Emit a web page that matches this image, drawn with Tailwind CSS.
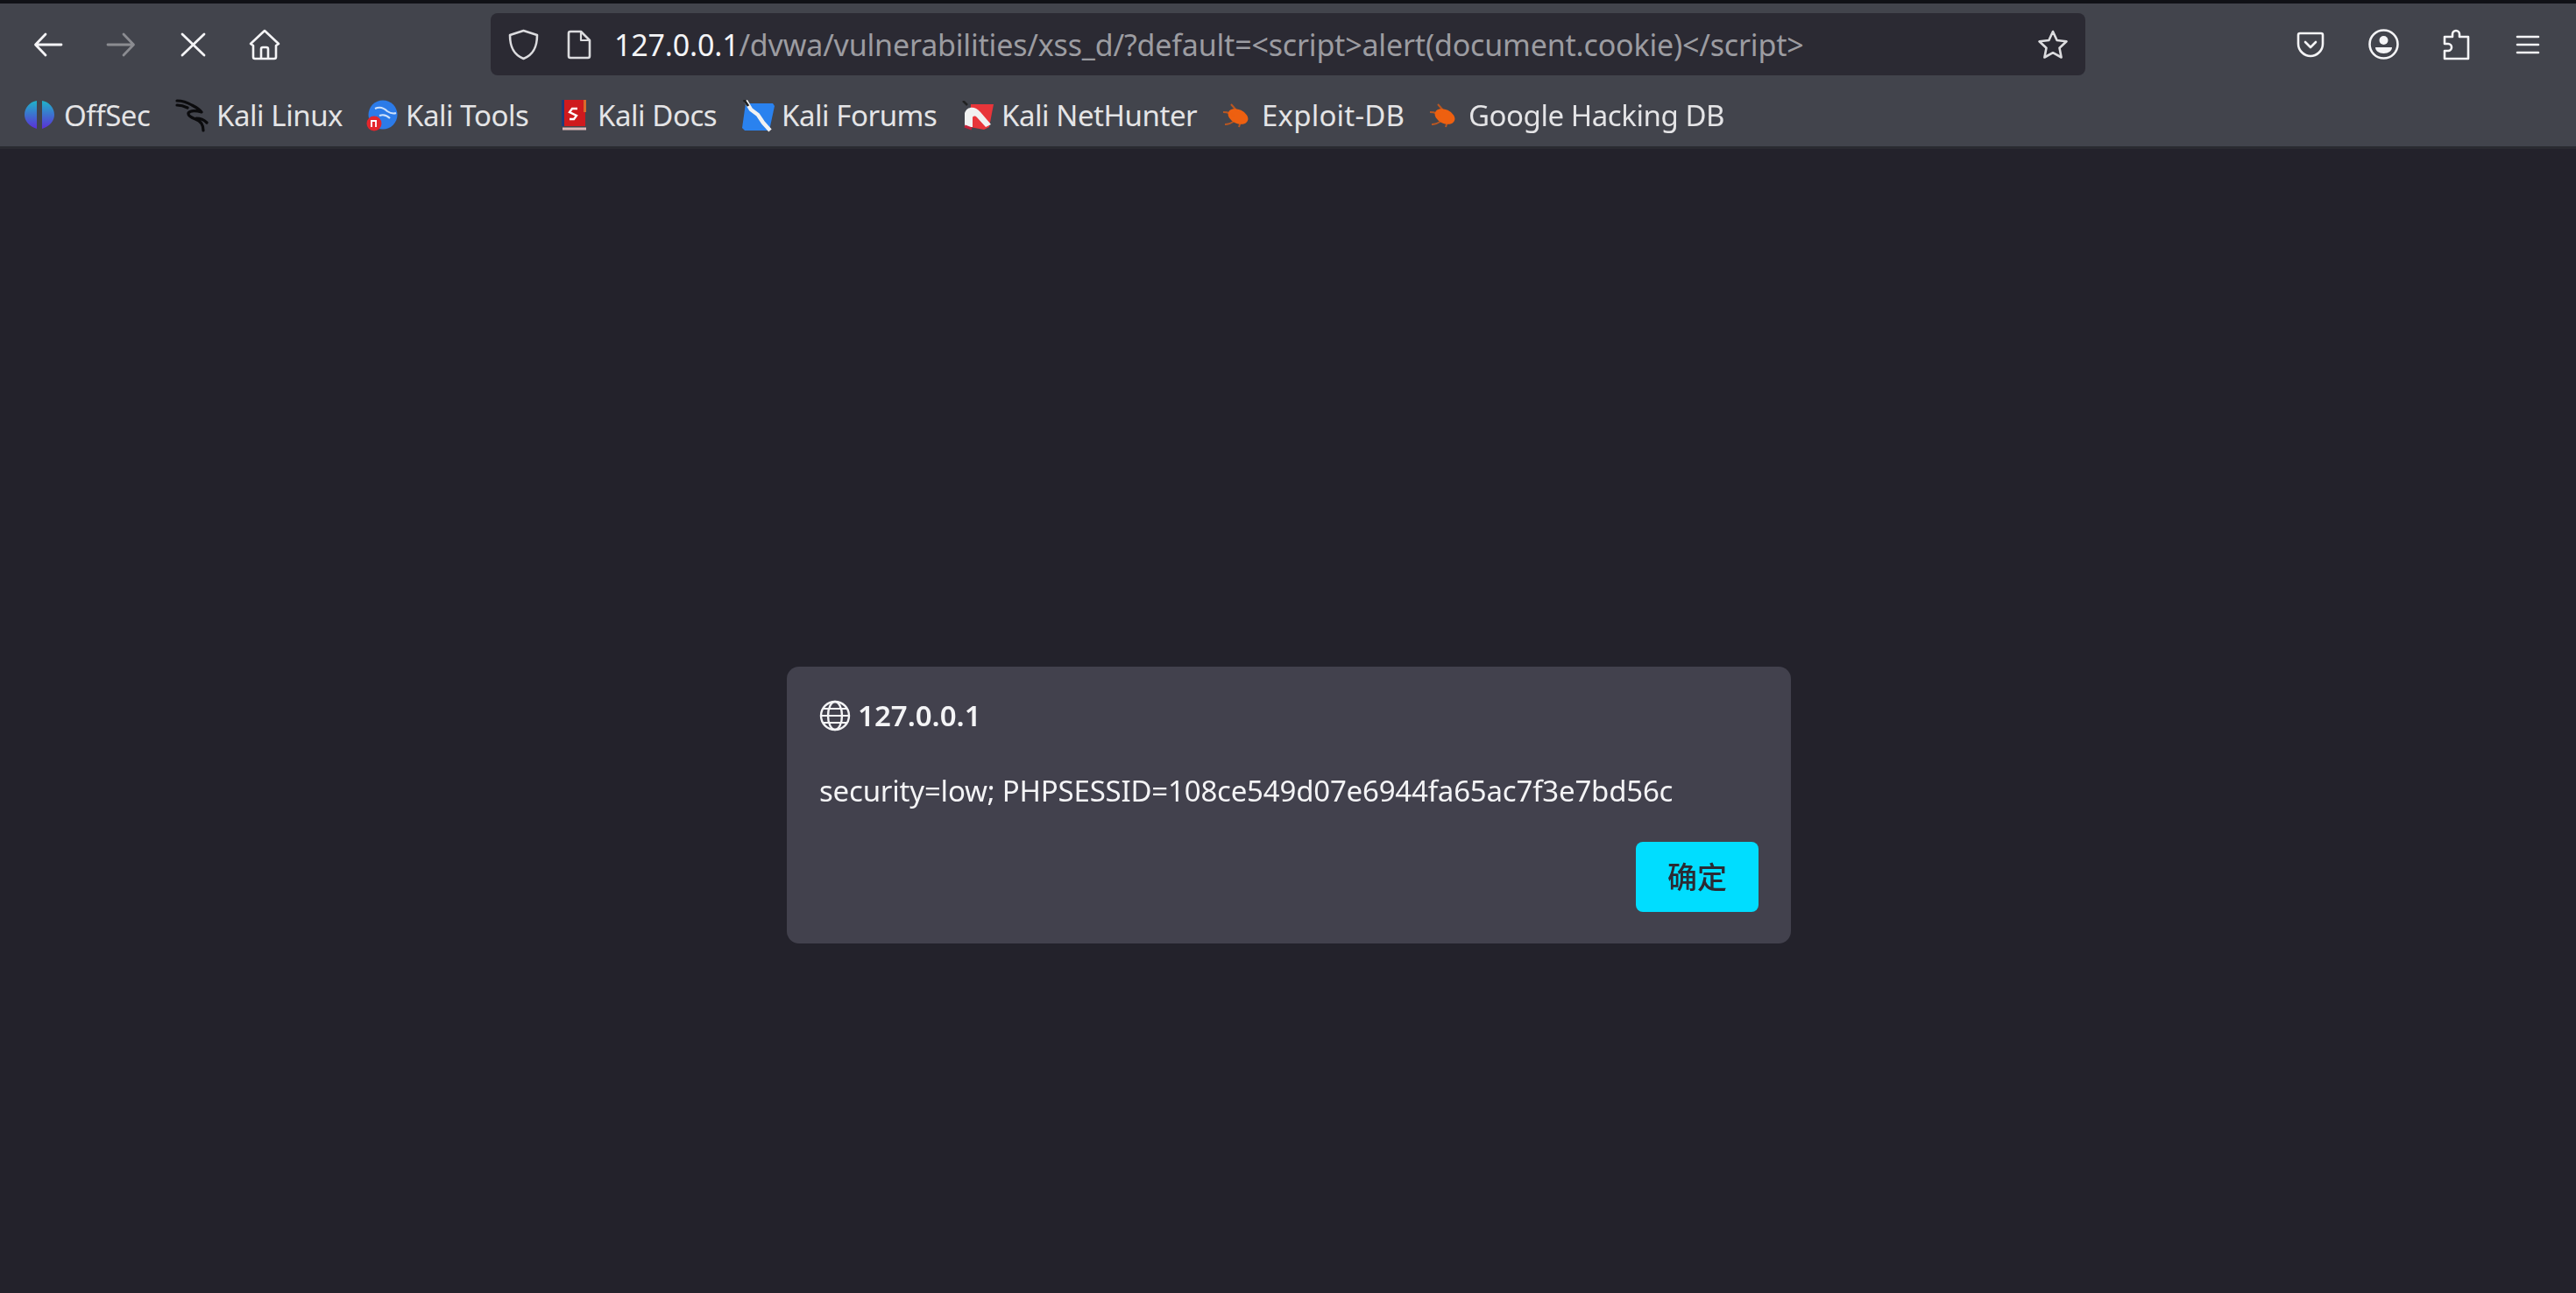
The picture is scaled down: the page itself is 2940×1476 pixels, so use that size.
<!DOCTYPE html>
<html lang="zh">

<head>
    <meta charset="UTF-8">
    <script src="https://cdn.jsdelivr.net/npm/@tailwindcss/browser@4"></script>
    <title>127.0.0.1</title>
</head>

<body class="bg-[#23222b] font-['Noto_Sans','Noto_Sans_CJK_SC',sans-serif] overflow-hidden">
    <div class="w-[2940px] h-[1476px] flex flex-col blur-[0.7px]">

        <!-- browser chrome -->
        <header class="shrink-0 border-t-4 border-[#101116] bg-[#42444c] h-[170px] border-b-3 border-b-[#2a2b31] flex flex-col">
            <div class="h-[93px] shrink-0 flex items-center">
                <div class="flex items-center w-[560px]">
                    <svg class="ml-[38px] w-[34px] h-[28px]" viewBox="0 0 34 28" fill="none" stroke="#f4f4f6" stroke-width="2.800" stroke-linecap="round" stroke-linejoin="round"><path d="M32 14H3M14 2 2.500 14 14 26"/></svg>
                    <svg class="ml-[49px] w-[34px] h-[28px]" viewBox="0 0 34 28" fill="none" stroke="#8b8c91" stroke-width="2.800" stroke-linecap="round" stroke-linejoin="round"><path d="M2 14h29M20 2l11.500 12L20 26"/></svg>
                    <svg class="ml-[51px] w-[29px] h-[28px]" viewBox="0 0 29 28" fill="none" stroke="#f4f4f6" stroke-width="2.800" stroke-linecap="round"><path d="M2 2l25 24M27 2 2 26"/></svg>
                    <svg class="ml-[49px] w-[36px] h-[36px]" viewBox="0 0 36 36" fill="none" stroke="#f4f4f6" stroke-width="2.600" stroke-linejoin="round"><path d="M2 17 18 2l16 15-3 2v13a2 2 0 0 1-2 2H7a2 2 0 0 1-2-2V19z"/><path d="M14 34V23a2 2 0 0 1 2-2h4a2 2 0 0 1 2 2v11"/></svg>
                </div>

                <div class="w-[1820px] h-[71px] rounded-[8px] bg-[#2b2a33] flex items-center">
                    <svg class="ml-[20px] w-[35px] h-[36px]" viewBox="0 0 35 36" fill="none" stroke="#dcdcdf" stroke-width="2.600" stroke-linejoin="round"><path d="M17.500 2 33 7c0 12-3 22-15.500 27C5 29 2 19 2 7z"/></svg>
                    <svg class="ml-[32px] w-[28px] h-[34px]" viewBox="0 0 28 34" fill="none" stroke="#dcdcdf" stroke-width="2.600" stroke-linejoin="round"><path d="M4 2h12l10 10v18a2 2 0 0 1-2 2H4a2 2 0 0 1-2-2V4a2 2 0 0 1 2-2z"/><path d="M16 2v10h10" stroke-width="2.200"/></svg>
                    <p class="ml-[26px] text-[34px] tracking-[-0.18px] leading-[60px] whitespace-nowrap text-[#f4f4f6]">127.0.0.1<span class="text-[#9c9ca1]">/dvwa/vulnerabilities/xss_d/?default=&lt;script&gt;alert(document.cookie)&lt;/script&gt;</span></p>
                    <svg class="ml-auto mr-[19px] w-[36px] h-[36px]" viewBox="0 0 36 36" fill="none" stroke="#dcdcdf" stroke-width="2.600" stroke-linejoin="round"><path d="M18 3l4.600 10 10.900 1.300-8 7.400 2.100 10.800L18 27.200 8.400 32.500l2.100-10.800-8-7.400L13.400 13z"/></svg>
                </div>

                <div class="flex items-center ml-[241px]">
                    <svg class="w-[32px] h-[30px]" viewBox="0 0 32 30" fill="none" stroke="#f4f4f6" stroke-width="2.600" stroke-linecap="round" stroke-linejoin="round"><path d="M4 2h24a2 2 0 0 1 2 2v10c0 8-7 14-14 14S2 22 2 14V4a2 2 0 0 1 2-2z"/><path d="M10 12l6 6 6-6"/></svg>
                    <svg class="ml-[50px] w-[35px] h-[35px]" viewBox="0 0 35 35" fill="none"><circle cx="17.500" cy="17.500" r="16" stroke="#f4f4f6" stroke-width="2.600"/><circle cx="17.500" cy="13" r="5" fill="#f4f4f6"/><path d="M8 21h19c0 4-4 7-9.500 7S8 25 8 21z" fill="#f4f4f6"/></svg>
                    <svg class="ml-[50px] w-[31px] h-[36px]" viewBox="0 0 31 36" fill="none" stroke="#f4f4f6" stroke-width="2.600" stroke-linejoin="round"><path d="M2 34V25h4a4 4 0 0 0 0-8H2V9h9V6a4 4 0 0 1 8 0v3h10v25z"/></svg>
                    <svg class="ml-[52px] w-[28px] h-[22px]" viewBox="0 0 28 22" fill="none" stroke="#f4f4f6" stroke-width="2.600" stroke-linecap="round"><path d="M2 2h24M2 11h24M2 20h24"/></svg>
                </div>
            </div>

            <!-- bookmarks -->
            <nav class="flex-1 flex items-center text-[33px] tracking-[-0.45px] text-[#e4e4e6] whitespace-nowrap">
                <a class="ml-[28px] flex items-center w-[172px]">
                    <svg class="w-[34px] h-[36px] mr-[11px]" viewBox="0 0 34 36"><defs><linearGradient id="off" x1="0" y1="0" x2="0" y2="1"><stop offset="0" stop-color="#1fb4c8"/><stop offset="1" stop-color="#5b2fd6"/></linearGradient></defs><path d="M14 1C6 2 0 9 0 17c0 7 5 13 14 16zM20 1c8 1 14 8 14 16 0 7-5 13-14 16z" fill="url(#off)"/><path d="M17 1v34" stroke="url(#off)" stroke-width="2"/></svg>
                    <span>OffSec</span>
                </a>
                <a class="flex items-center w-[218px]">
                    <svg class="w-[38px] h-[38px] mr-[9px]" viewBox="0 0 38 38" fill="none" stroke="#0b0b0d" stroke-width="3.200" stroke-linecap="round" stroke-linejoin="round"><path d="M2 2c6 0 12 2 17 5 4 2 8 4 11 8-6-2-13-2-15 1-1 3 3 5 8 7 6 2 9 7 9 13M2 7c4 0 8 1 12 3M24 22c4 0 9 2 12 5"/></svg>
                    <span>Kali Linux</span>
                </a>
                <a class="flex items-center w-[223px]">
                    <svg class="w-[36px] h-[36px] mr-[9px]" viewBox="0 0 36 36" fill="none"><circle cx="19" cy="17" r="16.500" fill="#2c7be8"/><path d="M10 10c6-3 11 0 14 3 3 2 7 3 10 2M15 18c5-2 9 0 12 3" stroke="#cfe2fb" stroke-width="2"/><circle cx="9" cy="27" r="8.500" fill="#e3262c"/><path d="M6 24v7M11 24v7M5 24h7" stroke="#fff" stroke-width="1.800"/></svg>
                    <span>Kali Tools</span>
                </a>
                <a class="flex items-center w-[206px]">
                    <svg class="w-[28px] h-[36px] mr-[13px]" viewBox="0 0 28 36" fill="none"><path d="M0 0h27v30H0z" fill="#cf1a1e"/><path d="M0 0h3v30H0z" fill="#1f3a78"/><path d="M25 0h3v14h-3z" fill="#d96a2a"/><path d="M1 33h27" stroke="#d9b8b8" stroke-width="3"/><path d="M18 10h-6l-3 4 8 4-3 4H9" stroke="#fff" stroke-width="2.400"/></svg>
                    <span>Kali Docs</span>
                </a>
                <a class="flex items-center w-[251px]">
                    <svg class="w-[37px] h-[37px] mr-[8px]" viewBox="0 0 37 37" fill="none"><path d="M4 4h31l2 3-6 28H3l-3-3z" fill="#2a82ef"/><path d="M4 1l6 10 8 6 6 9 8 9" stroke="#f2f2f2" stroke-width="4.500"/><path d="M2 0l5 7" stroke="#222" stroke-width="3"/></svg>
                    <span>Kali Forums</span>
                </a>
                <a class="flex items-center w-[297px]">
                    <svg class="w-[36px] h-[34px] mr-[9px]" viewBox="0 0 36 34" fill="none"><path d="M10 4h26l-5 26-6 3-16-3z" fill="#e8353a"/><path d="M3 30h9V20c0-3 3-3 5-1l10 11 6-3-12-14C15 6 6 6 3 14z" fill="#f1f1f1"/><path d="M3 29l8 3" stroke="#c2203a" stroke-width="3"/><path d="M1 0l5 5" stroke="#222" stroke-width="2.500"/></svg>
                    <span>Kali NetHunter</span>
                </a>
                <a class="flex items-center w-[236px]">
                    <svg class="w-[35px] h-[28px] mr-[10px]" viewBox="0 0 35 28" fill="none"><ellipse cx="18" cy="15" rx="12" ry="8" transform="rotate(25 18 15)" fill="#ee6010"/><path d="M1 10c5 0 10 2 12 5M10 1l7 8M3 24c4 0 8-2 11-4M19 27l2-6" stroke="#ee6010" stroke-width="2" opacity="0.700"/></svg>
                    <span class="tracking-[0.2px]">Exploit-DB</span>
                </a>
                <a class="flex items-center">
                    <svg class="w-[35px] h-[28px] mr-[10px]" viewBox="0 0 35 28" fill="none"><ellipse cx="18" cy="15" rx="12" ry="8" transform="rotate(25 18 15)" fill="#ee6010"/><path d="M1 10c5 0 10 2 12 5M10 1l7 8M3 24c4 0 8-2 11-4M19 27l2-6" stroke="#ee6010" stroke-width="2" opacity="0.700"/></svg>
                    <span>Google Hacking DB</span>
                </a>
            </nav>
        </header>

        <!-- page: alert dialog -->
        <main class="flex-1 flex justify-center">
            <div class="ml-[2px] mt-[591px] w-[1146px] h-[316px] rounded-[14px] bg-[#42414d] pl-[37px] pr-[37px] pt-[33px] flex flex-col text-[#f4f4f6]">
                <div class="h-[46px] flex items-center">
                    <svg class="w-[36px] h-[36px] mr-[8px]" viewBox="0 0 36 36" fill="none" stroke="#f4f4f6" stroke-width="2.400"><circle cx="18" cy="18" r="16"/><ellipse cx="18" cy="18" rx="8" ry="16"/><path d="M2 18h32M5 10h26M5 26h26" stroke-width="2"/></svg>
                    <h1 class="text-[33px] font-semibold leading-[46px]">127.0.0.1</h1>
                </div>
                <p class="mt-[40px] text-[33px] tracking-[-0.2px] leading-[46px] whitespace-nowrap">security=low; PHPSESSID=108ce549d07e6944fa65ac7f3e7bd56c</p>
                <div class="flex justify-end mt-[35px]">
                    <button class="w-[140px] h-[80px] rounded-[8px] bg-[#00ddff] text-[#2b2a33] text-[34px] font-medium">确定</button>
                </div>
            </div>
        </main>
    </div>
</body>

</html>
